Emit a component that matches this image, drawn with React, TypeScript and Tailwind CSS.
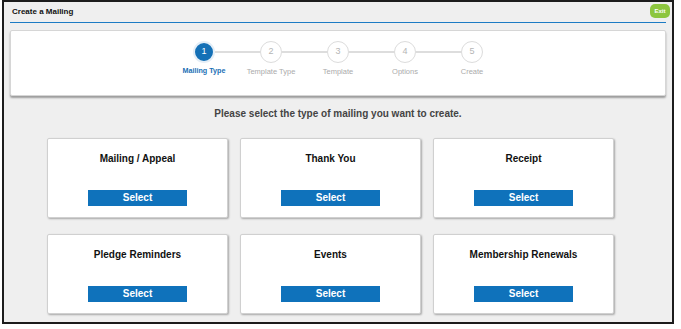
const steps = ["Mailing Type", "Template Type", "Template", "Options", "Create"];

const types = [
  "Mailing / Appeal",
  "Thank You",
  "Receipt",
  "Pledge Reminders",
  "Events",
  "Membership Renewals",
];

function Stepper() {
  return (
    <div className="flex justify-center pt-[10px]">
      {steps.map((label, i) => (
        <div key={label} className="relative flex w-[67px] flex-col items-center">
          {i < steps.length - 1 && (
            <div className="absolute left-[44px] top-[10px] h-[1.5px] w-[46px] bg-[#dddddd]" />
          )}
          {i === 0 ? (
            <div className="relative z-10 flex h-[22px] w-[22px] items-center justify-center rounded-full border-2 border-[#e4eef7] bg-[#1470b6] text-[9px] text-white">
              1
            </div>
          ) : (
            <div className="relative z-10 flex h-[22px] w-[22px] items-center justify-center rounded-full border border-[#dcdcdc] bg-white text-[9px] text-[#b5b5b5]">
              {i + 1}
            </div>
          )}
          <div
            className={
              i === 0
                ? "mt-[3px] whitespace-nowrap text-[7.2px] font-bold text-[#1a6fb5]"
                : "mt-[3px] whitespace-nowrap text-[7.5px] text-[#ababab]"
            }
          >
            {label}
          </div>
        </div>
      ))}
    </div>
  );
}

export default function App() {
  return (
    <div className="min-h-[329px] bg-white pl-[2px] font-['Liberation_Sans',Arial,sans-serif]">
      <div className="h-[324px] w-[672px] border-2 border-[#1c1c1c] bg-[#efefef]">
        <div className="mx-[6px] flex h-[21px] items-center justify-between border-b-[1.5px] border-[#1c7bc4] pl-[2px]">
          <span className="text-[8px] font-bold text-[#111]">Create a Mailing</span>
          <span className="mb-[2px] mr-[-4px] flex h-[14px] w-[20px] items-center justify-center rounded-[5px] bg-[#8dc63f] text-[6px] font-bold text-white">
            Exit
          </span>
        </div>

        <div className="mx-[6px] mt-[7px] h-[66px] rounded-[2px] border border-[#d6d6d6] bg-white shadow-[0_2px_2px_rgba(0,0,0,0.35)]">
          <Stepper />
        </div>

        <p className="mt-[10px] text-center text-[10px] font-bold text-[#444]">
          Please select the type of mailing you want to create.
        </p>

        <div className="mt-[17px] grid grid-cols-[181px_181px_181px] gap-x-[12px] gap-y-[16px] pl-[43px]">
          {types.map((t) => (
            <div
              key={t}
              className="flex h-[80px] flex-col items-center rounded-[2px] border border-[#d0d0d0] bg-white shadow-[1px_1px_2px_rgba(0,0,0,0.3)]"
            >
              <div className="mt-[12px] text-[10px] font-bold text-[#111]">{t}</div>
              <button className="mt-[24px] h-[16px] w-[99px] bg-[#0f72bb] text-[10px] font-bold leading-[16px] text-white">
                Select
              </button>
            </div>
          ))}
        </div>
      </div>
    </div>
  );
}
